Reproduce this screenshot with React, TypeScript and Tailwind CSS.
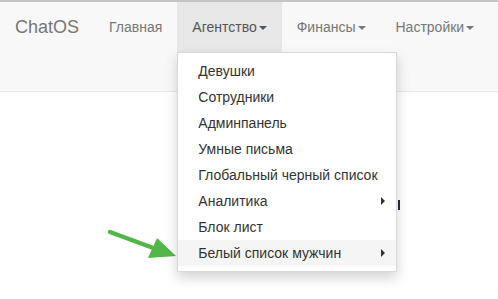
import React from "react";

const items: { label: string; sub?: boolean; active?: boolean }[] = [
  { label: "Девушки" },
  { label: "Сотрудники" },
  { label: "Админпанель" },
  { label: "Умные письма" },
  { label: "Глобальный черный список" },
  { label: "Аналитика", sub: true },
  { label: "Блок лист" },
  { label: "Белый список мужчин", sub: true, active: true },
];

function Caret() {
  return (
    <span className="ml-[2px] inline-block h-0 w-0 align-middle border-t-[4px] border-t-current border-x-[4px] border-x-transparent" />
  );
}

export default function App() {
  return (
    <div
      className="relative h-[299px] w-[498px] overflow-hidden bg-white text-[14px]"
      style={{ fontFamily: '"Liberation Sans", Arial, Helvetica, sans-serif' }}
    >
      <div className="h-[2px] bg-[#c4c4c4]" />
      <nav className="h-[90px] border-b border-[#e7e7e7] bg-[#f8f8f8]">
        <div className="flex items-start whitespace-nowrap">
          <div className="px-[15px] py-[15px] text-[18px] leading-[20px] text-[#777]">ChatOS</div>
          <div className="px-[15px] py-[15px] leading-[20px] text-[#777]">Главная</div>
          <div className="relative">
            <div className="bg-[#e7e7e7] px-[15px] py-[15px] leading-[20px] text-[#555]">
              Агентство<Caret />
            </div>
            <div className="absolute left-0 top-full z-10 w-[220px] border border-[rgba(0,0,0,0.15)] bg-white py-[5px] shadow-[0_6px_12px_rgba(0,0,0,0.175)]">
              {items.map((it) => (
                <div
                  key={it.label}
                  className={`relative whitespace-nowrap px-[20px] py-[3px] leading-[20px] text-[#333] ${it.active ? "bg-[#f5f5f5]" : ""}`}
                >
                  {it.label}
                  {it.sub && (
                    <span className="absolute right-[11px] top-[9px] h-0 w-0 border-l-[4px] border-l-[#333] border-y-[4px] border-y-transparent" />
                  )}
                </div>
              ))}
            </div>
          </div>
          <div className="px-[15px] py-[15px] leading-[20px] text-[#777]">
            Финансы<Caret />
          </div>
          <div className="px-[15px] py-[15px] leading-[20px] text-[#777]">
            Настройки<Caret />
          </div>
        </div>
      </nav>
      <div className="absolute left-[177px] top-[143px] h-[12px] w-[1px] bg-[#333]" />
      <div className="absolute left-[398px] top-[200px] h-[10px] w-[2px] bg-[#2a2a4a]" />
      <svg className="absolute left-0 top-0" width="498" height="299" viewBox="0 0 498 299">
        <line x1="110" y1="232" x2="156" y2="249" stroke="#52b748" strokeWidth="4.5" strokeLinecap="round" />
        <polygon points="157,238 148,258 176,256" fill="#52b748" />
      </svg>
    </div>
  );
}
